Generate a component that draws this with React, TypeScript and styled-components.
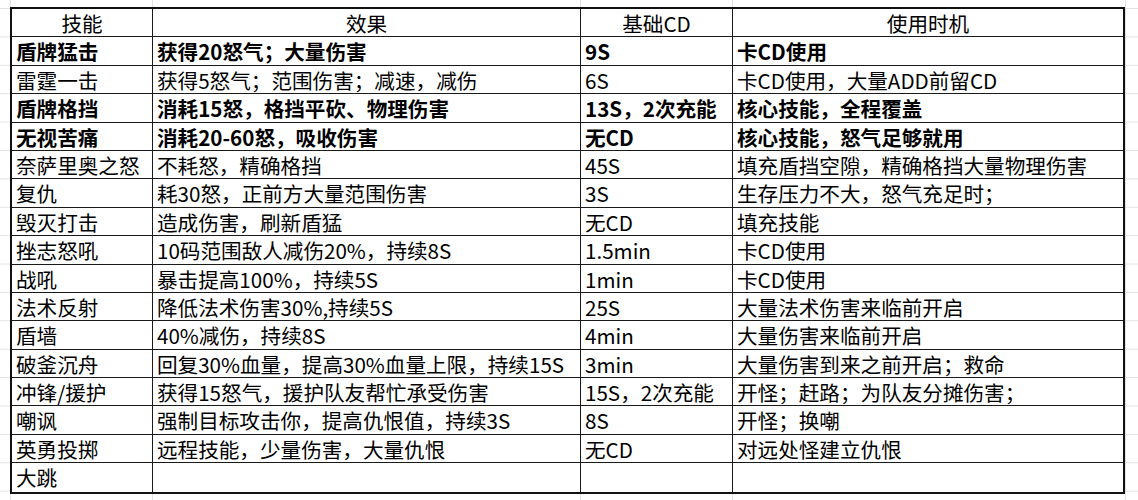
import React from "react";
import styled, { createGlobalStyle } from "styled-components";

const GlobalStyle = createGlobalStyle`
  html, body { margin: 0; padding: 0; background: #ffffff; }
  body { font-family: "Noto Sans CJK SC", "Noto Sans", sans-serif; color: #000; }
`;

const GRID = "#e2e2e2";
const ROW_H = 28.4;

const Sheet = styled.div`
  width: 1138px;
  height: 500px;
  overflow: hidden;
  box-sizing: border-box;
  padding: 7px 0 0 10px;
  background-color: #fff;
  background-image:
    linear-gradient(${GRID}, ${GRID}),
    linear-gradient(${GRID}, ${GRID}),
    linear-gradient(${GRID}, ${GRID}),
    linear-gradient(${GRID}, ${GRID}),
    linear-gradient(${GRID}, ${GRID}),
    linear-gradient(to bottom, transparent 0, transparent ${ROW_H - 1}px, ${GRID} ${ROW_H - 1}px, ${GRID} ${ROW_H}px);
  background-size: 1px 100%, 1px 100%, 1px 100%, 1px 100%, 1px 100%, 100% ${ROW_H}px;
  background-position: 10px 0, 152px 0, 580px 0, 732px 0, 1125px 0, 0 9px;
  background-repeat: no-repeat, no-repeat, no-repeat, no-repeat, no-repeat, repeat-y;
`;

const Table = styled.div`
  display: grid;
  grid-template-columns: 141px 428px 152px 390px;
  grid-auto-rows: ${ROW_H}px;
  width: max-content;
  background: #fff;
  border: 2px solid #111;
`;

const Cell = styled.div<{ $bold?: boolean; $center?: boolean; $lastCol?: boolean; $lastRow?: boolean }>`
  box-sizing: border-box;
  border-right: ${(p) => (p.$lastCol ? "none" : "1px solid #1a1a1a")};
  border-bottom: ${(p) => (p.$lastRow ? "none" : "1px solid #1a1a1a")};
  padding: 1px 4px 0 4px;
  font-size: 20.6px;
  line-height: ${ROW_H - 2}px;
  font-weight: ${(p) => (p.$bold ? 700 : 400)};
  text-align: ${(p) => (p.$center ? "center" : "left")};
  white-space: nowrap;
  overflow: hidden;
  color: #000;
`;

type Row = { c: [string, string, string, string]; bold?: boolean };

const header: [string, string, string, string] = ["技能", "效果", "基础CD", "使用时机"];

const rows: Row[] = [
  { c: ["盾牌猛击", "获得20怒气；大量伤害", "9S", "卡CD使用"], bold: true },
  { c: ["雷霆一击", "获得5怒气；范围伤害；减速，减伤", "6S", "卡CD使用，大量ADD前留CD"] },
  { c: ["盾牌格挡", "消耗15怒，格挡平砍、物理伤害", "13S，2次充能", "核心技能，全程覆盖"], bold: true },
  { c: ["无视苦痛", "消耗20-60怒，吸收伤害", "无CD", "核心技能，怒气足够就用"], bold: true },
  { c: ["奈萨里奥之怒", "不耗怒，精确格挡", "45S", "填充盾挡空隙，精确格挡大量物理伤害"] },
  { c: ["复仇", "耗30怒，正前方大量范围伤害", "3S", "生存压力不大，怒气充足时；"] },
  { c: ["毁灭打击", "造成伤害，刷新盾猛", "无CD", "填充技能"] },
  { c: ["挫志怒吼", "10码范围敌人减伤20%，持续8S", "1.5min", "卡CD使用"] },
  { c: ["战吼", "暴击提高100%，持续5S", "1min", "卡CD使用"] },
  { c: ["法术反射", "降低法术伤害30%,持续5S", "25S", "大量法术伤害来临前开启"] },
  { c: ["盾墙", "40%减伤，持续8S", "4min", "大量伤害来临前开启"] },
  { c: ["破釜沉舟", "回复30%血量，提高30%血量上限，持续15S", "3min", "大量伤害到来之前开启；救命"] },
  { c: ["冲锋/援护", "获得15怒气，援护队友帮忙承受伤害", "15S，2次充能", "开怪；赶路；为队友分摊伤害；"] },
  { c: ["嘲讽", "强制目标攻击你，提高仇恨值，持续3S", "8S", "开怪；换嘲"] },
  { c: ["英勇投掷", "远程技能，少量伤害，大量仇恨", "无CD", "对远处怪建立仇恨"] },
  { c: ["大跳", "", "", ""] },
];

export default function App() {
  return (
    <>
      <GlobalStyle />
      <Sheet>
        <Table>
          {header.map((h, i) => (
            <Cell key={`h${i}`} $center $lastCol={i === 3}>
              {h}
            </Cell>
          ))}
          {rows.map((r, ri) =>
            r.c.map((t, ci) => (
              <Cell
                key={`${ri}-${ci}`}
                $bold={r.bold}
                $lastCol={ci === 3}
                $lastRow={ri === rows.length - 1}
              >
                {t}
              </Cell>
            ))
          )}
        </Table>
      </Sheet>
    </>
  );
}
